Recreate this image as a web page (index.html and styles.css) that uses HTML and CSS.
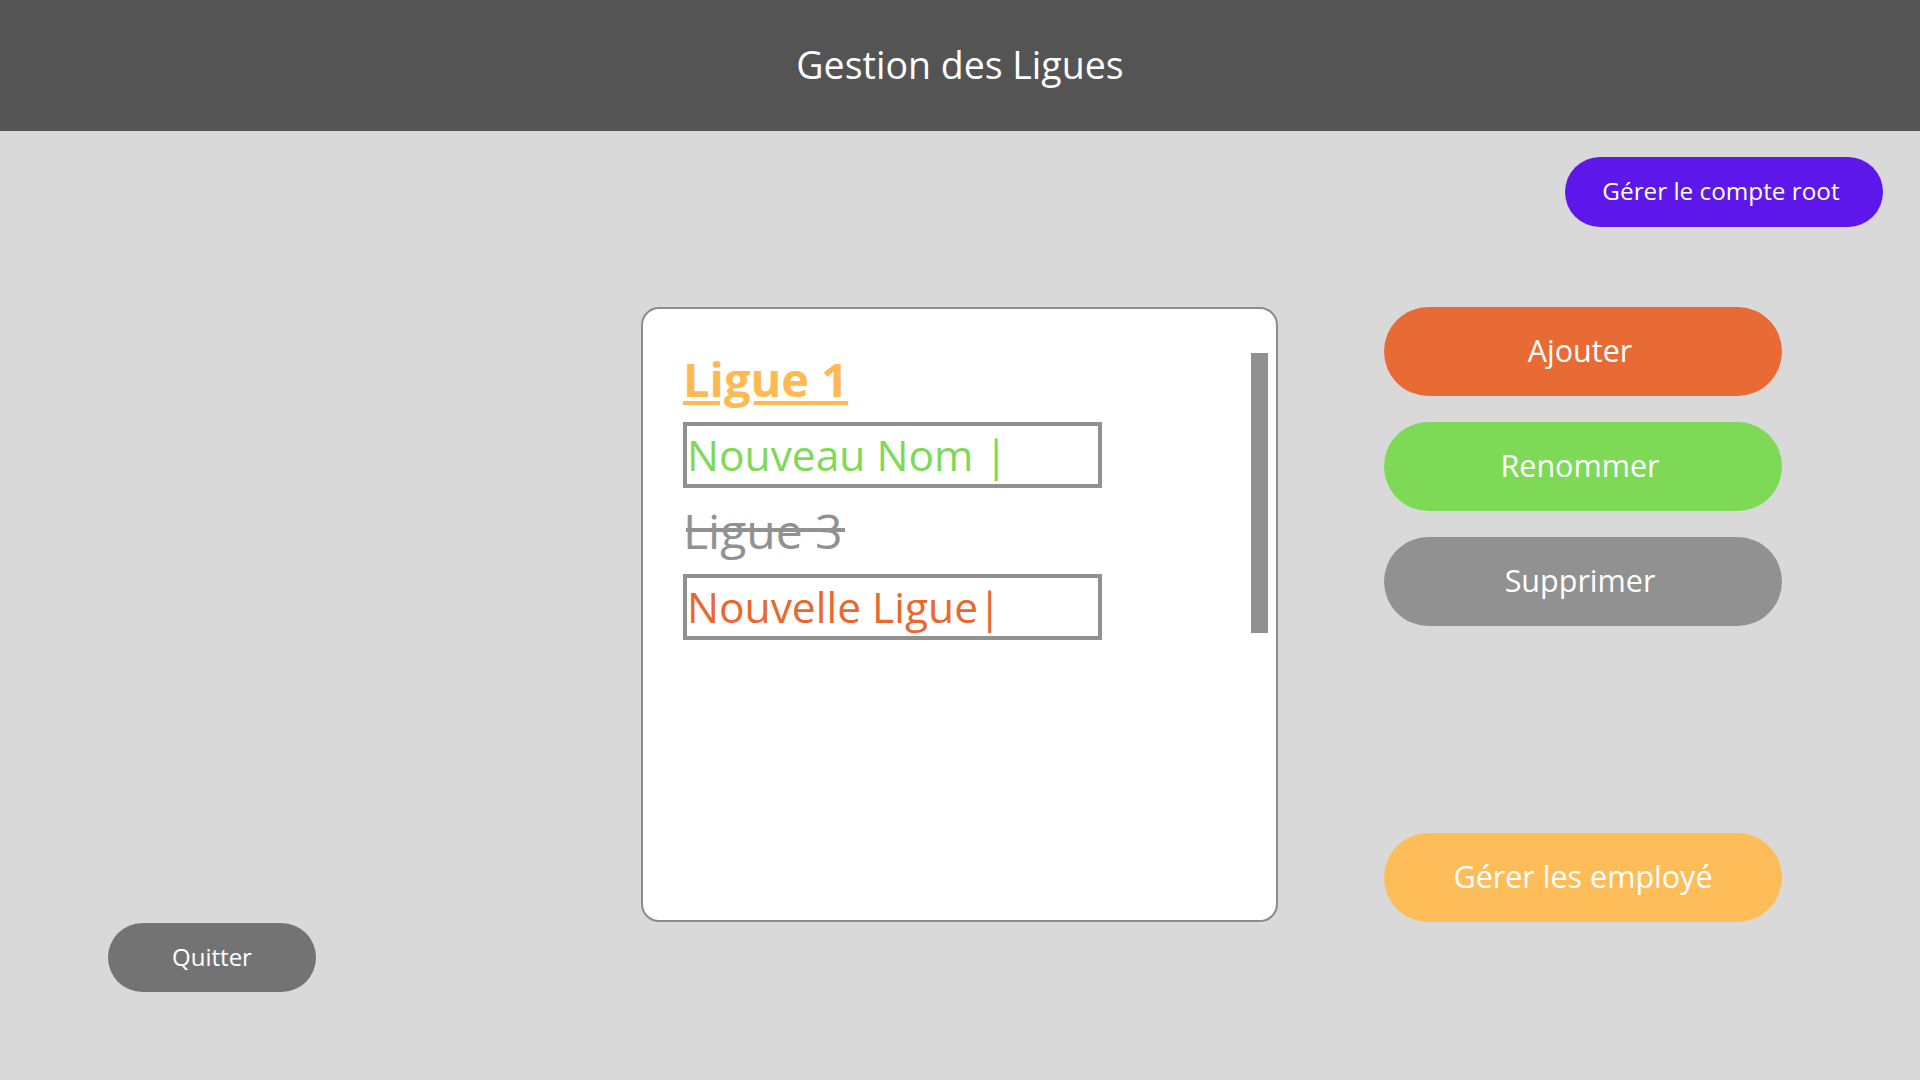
FILE: index.html
```html
<!DOCTYPE html>
<html lang="fr">
<head>
<meta charset="utf-8">
<title>Gestion des Ligues</title>
<link rel="stylesheet" href="styles.css">
</head>
<body>
<header class="topbar">
  <h1 class="title">Gestion des Ligues</h1>
</header>
<main class="main">
  <div class="toprow">
    <button class="pill pill-root">Gérer le compte root</button>
  </div>
  <div class="workspace">
    <button class="pill pill-quit">Quitter</button>
    <section class="panel">
      <div class="list">
        <div class="item item-selected">Ligue 1</div>
        <div class="field field-green">Nouveau Nom |</div>
        <div class="item item-deleted">Ligue 3</div>
        <div class="field field-orange">Nouvelle Ligue|</div>
      </div>
      <div class="scrollbar"></div>
    </section>
    <div class="actions">
      <button class="pill pill-big pill-add">Ajouter</button>
      <button class="pill pill-big pill-rename">Renommer</button>
      <button class="pill pill-big pill-delete">Supprimer</button>
      <button class="pill pill-big pill-staff">Gérer les employé</button>
    </div>
  </div>
</main>
</body>
</html>
```

FILE: styles.css
```css
* { box-sizing: border-box; }
html, body { margin: 0; padding: 0; }
body {
  width: 1920px;
  height: 1080px;
  background: #d9d9d9;
  font-family: "Open Sans", "Noto Sans", sans-serif;
  overflow: hidden;
}
.topbar {
  height: 131px;
  background: #545454;
  display: flex;
  align-items: center;
  justify-content: center;
}
.title {
  margin: 0;
  color: #ffffff;
  font-size: 37.5px;
  font-weight: 400;
  line-height: 1;
  padding-bottom: 2px;
}
.main {
  padding: 26px 37px 0 108px;
}
.toprow {
  display: flex;
  justify-content: flex-end;
}
.pill {
  border: none;
  margin: 0;
  padding: 0 6px 3px 0;
  font-family: "Open Sans", "Noto Sans", sans-serif;
  color: #ffffff;
  font-weight: 400;
  display: flex;
  align-items: center;
  justify-content: center;
  cursor: pointer;
}
.pill-root {
  width: 318px;
  height: 70px;
  border-radius: 35px;
  background: #5e17eb;
  font-size: 24.3px;
}
.workspace {
  margin-top: 80px;
  height: 685px;
  display: flex;
  align-items: flex-start;
}
.pill-quit {
  align-self: flex-end;
  width: 208px;
  height: 69px;
  border-radius: 35px;
  background: #737373;
  font-size: 24px;
  padding-right: 0;
}
.panel {
  margin-left: 325px;
  width: 637px;
  height: 615px;
  background: #ffffff;
  border: 2px solid #8c8c8c;
  border-radius: 18px;
  display: flex;
  align-items: flex-start;
}
.list {
  flex: 1;
  padding: 42px 0 0 40px;
  display: flex;
  flex-direction: column;
  align-items: flex-start;
  gap: 15px;
}
.item {
  height: 56px;
  line-height: 56px;
  white-space: nowrap;
}
.item-selected {
  font-size: 47px;
  font-weight: 700;
  color: #ffb951;
  text-decoration: underline;
  text-decoration-thickness: 4px;
  text-underline-offset: 4px;
}
.item-deleted {
  position: relative;
  font-size: 48px;
  font-weight: 400;
  color: #919191;
}
.item-deleted::after {
  content: "";
  position: absolute;
  left: 3px;
  right: -2px;
  top: 25px;
  height: 4px;
  background: #919191;
}
.field {
  width: 419px;
  height: 66px;
  border: 4px solid #919191;
  padding-left: 0;
  font-size: 42.5px;
  line-height: 58px;
  white-space: nowrap;
}
.field-green { color: #7ed957; }
.field-orange { color: #e8692f; }
.scrollbar {
  width: 17px;
  height: 280px;
  margin-top: 44px;
  margin-right: 8px;
  background: #919191;
}
.actions {
  margin-left: 106px;
  width: 398px;
  height: 615px;
  display: flex;
  flex-direction: column;
  gap: 26px;
}
.pill-big {
  width: 398px;
  height: 89px;
  border-radius: 45px;
  font-size: 30.5px;
  flex: none;
}
.pill-add { background: #e86b35; }
.pill-rename { background: #7ed957; }
.pill-delete { background: #919191; }
.pill-staff { background: #ffbd59; margin-top: auto; padding-right: 0; }
```
